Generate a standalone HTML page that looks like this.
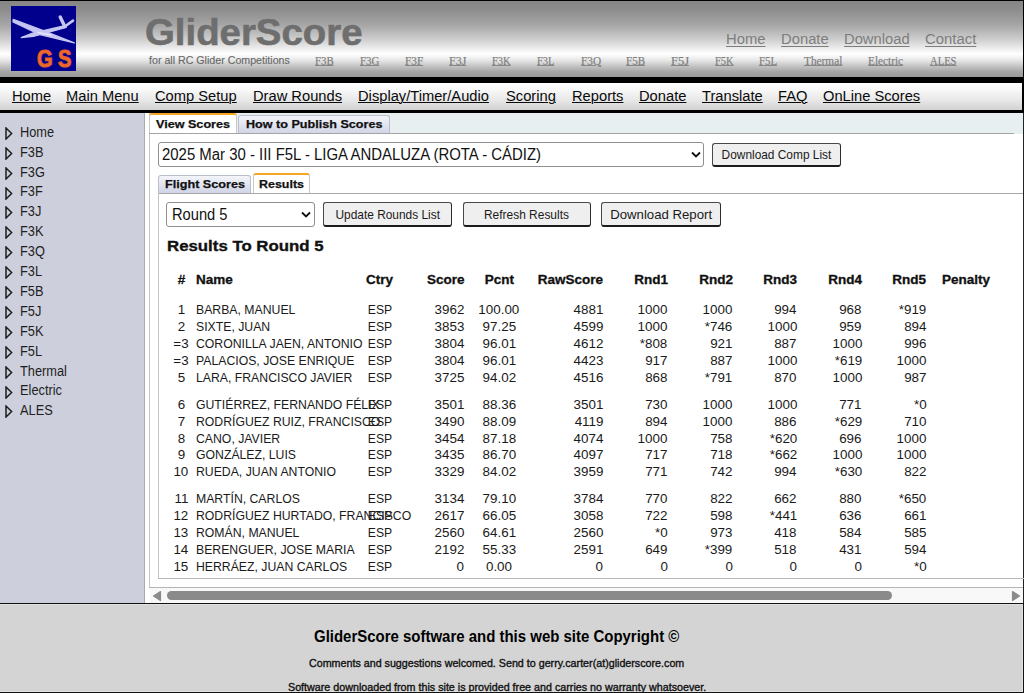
<!DOCTYPE html>
<html><head><meta charset="utf-8"><style>
*{margin:0;padding:0;box-sizing:border-box}
html,body{width:1024px;height:693px;overflow:hidden;background:#fff;font-family:"Liberation Sans",sans-serif;color:#000}
.a{position:absolute}
.c{position:absolute;white-space:nowrap;line-height:normal}
.u{text-decoration:underline}
</style></head><body>
<div class="a" style="left:0;top:0;width:1024px;height:77px;background:linear-gradient(#000 0px,#000 1px,#858585 1px,#8d8d8d 10px,#a6a6a6 25px,#d0d0d0 40px,#f2f2f2 50px,#ffffff 54px,#e8e8e8 60px,#bfbfbf 67px,#a4a4a4 72px,#9a9a9a 77px)"></div>
<div class="a" style="left:1023px;top:0;width:1px;height:113px;background:#000"></div>
<svg class="a" style="left:11px;top:6px" width="65" height="65" viewBox="0 0 65 65">
<rect x="0" y="0" width="65" height="65" fill="#00008c"/>
<g fill="#c6c6f4" stroke="#c6c6f4" stroke-linejoin="round" stroke-linecap="round">
<path d="M2.2 13.4 L31 24.0 L63.3 36.9 L29.0 28.6 L2.0 15.8 Z" stroke-width="1.3"/>
<path d="M10.2 31.6 L21.6 27.0 L54.8 19.4 L55.3 21.5 L22.4 30.4 Z" stroke-width="1.1"/>
<path d="M49.2 11 L53.3 19.5" stroke-width="3.4" fill="none"/>
<path d="M53.5 20.8 L62 14.6" stroke-width="2.6" fill="none"/>
<path d="M27 26.5 L40 29" stroke="#e4e4fa" stroke-width="1.6" fill="none"/>
</g>
<g font-family="Liberation Sans" font-weight="bold" font-size="24" fill="#ee6a2c" stroke="#e8602a" stroke-width="1.1"><text transform="translate(26,61) scale(0.84,1)">G</text><text transform="translate(47,61) scale(0.84,1)">S</text></g>
</svg>
<div class="c" style="top:11.00px;font-size:37.3px;color:#6e6e6e;font-weight:bold;left:144.70px;transform:scaleX(1.0286);transform-origin:left 0;-webkit-text-stroke:0.6px #6e6e6e;">GliderScore</div>
<div class="c" style="top:53.63px;font-size:11.2px;color:#686868;left:148.90px;transform:scaleX(0.9518);transform-origin:left 0;-webkit-text-stroke:0.15px #686868;">for all RC Glider Competitions</div>
<div class="c" style="top:30.20px;font-size:15.3px;color:#7d7d7d;left:726.40px;transform:scaleX(0.9678);transform-origin:left 0;text-decoration:underline;text-underline-offset:1.5px;text-decoration-thickness:1px;">Home</div>
<div class="c" style="top:30.20px;font-size:15.3px;color:#7d7d7d;left:781.20px;transform:scaleX(0.9668);transform-origin:left 0;text-decoration:underline;text-underline-offset:1.5px;text-decoration-thickness:1px;">Donate</div>
<div class="c" style="top:30.20px;font-size:15.3px;color:#7d7d7d;left:844.20px;transform:scaleX(0.9641);transform-origin:left 0;text-decoration:underline;text-underline-offset:1.5px;text-decoration-thickness:1px;">Download</div>
<div class="c" style="top:30.20px;font-size:15.3px;color:#7d7d7d;left:925.00px;transform:scaleX(0.9729);transform-origin:left 0;text-decoration:underline;text-underline-offset:1.5px;text-decoration-thickness:1px;">Contact</div>
<div class="c" style="top:53.77px;font-size:12.5px;color:#7c7c7c;font-family:'Liberation Serif',serif;left:314.80px;transform:scaleX(0.8635);transform-origin:left 0;text-decoration:underline;text-underline-offset:0px;-webkit-text-stroke:0.2px #888;">F3B</div>
<div class="c" style="top:53.77px;font-size:12.5px;color:#7c7c7c;font-family:'Liberation Serif',serif;left:359.80px;transform:scaleX(0.8682);transform-origin:left 0;text-decoration:underline;text-underline-offset:0px;-webkit-text-stroke:0.2px #888;">F3G</div>
<div class="c" style="top:53.77px;font-size:12.5px;color:#7c7c7c;font-family:'Liberation Serif',serif;left:404.80px;transform:scaleX(0.9030);transform-origin:left 0;text-decoration:underline;text-underline-offset:0px;-webkit-text-stroke:0.2px #888;">F3F</div>
<div class="c" style="top:53.77px;font-size:12.5px;color:#7c7c7c;font-family:'Liberation Serif',serif;left:448.70px;transform:scaleX(0.9576);transform-origin:left 0;text-decoration:underline;text-underline-offset:0px;-webkit-text-stroke:0.2px #888;">F3J</div>
<div class="c" style="top:53.77px;font-size:12.5px;color:#7c7c7c;font-family:'Liberation Serif',serif;left:492.30px;transform:scaleX(0.8412);transform-origin:left 0;text-decoration:underline;text-underline-offset:0px;-webkit-text-stroke:0.2px #888;">F3K</div>
<div class="c" style="top:53.77px;font-size:12.5px;color:#7c7c7c;font-family:'Liberation Serif',serif;left:536.60px;transform:scaleX(0.8302);transform-origin:left 0;text-decoration:underline;text-underline-offset:0px;-webkit-text-stroke:0.2px #888;">F3L</div>
<div class="c" style="top:53.77px;font-size:12.5px;color:#7c7c7c;font-family:'Liberation Serif',serif;left:580.60px;transform:scaleX(0.8997);transform-origin:left 0;text-decoration:underline;text-underline-offset:0px;-webkit-text-stroke:0.2px #888;">F3Q</div>
<div class="c" style="top:53.77px;font-size:12.5px;color:#7c7c7c;font-family:'Liberation Serif',serif;left:626.30px;transform:scaleX(0.8821);transform-origin:left 0;text-decoration:underline;text-underline-offset:0px;-webkit-text-stroke:0.2px #888;">F5B</div>
<div class="c" style="top:53.77px;font-size:12.5px;color:#7c7c7c;font-family:'Liberation Serif',serif;left:670.50px;transform:scaleX(0.9963);transform-origin:left 0;text-decoration:underline;text-underline-offset:0px;-webkit-text-stroke:0.2px #888;">F5J</div>
<div class="c" style="top:53.77px;font-size:12.5px;color:#7c7c7c;font-family:'Liberation Serif',serif;left:714.60px;transform:scaleX(0.8367);transform-origin:left 0;text-decoration:underline;text-underline-offset:0px;-webkit-text-stroke:0.2px #888;">F5K</div>
<div class="c" style="top:53.77px;font-size:12.5px;color:#7c7c7c;font-family:'Liberation Serif',serif;left:758.90px;transform:scaleX(0.8686);transform-origin:left 0;text-decoration:underline;text-underline-offset:0px;-webkit-text-stroke:0.2px #888;">F5L</div>
<div class="c" style="top:53.77px;font-size:12.5px;color:#7c7c7c;font-family:'Liberation Serif',serif;left:803.50px;transform:scaleX(0.9046);transform-origin:left 0;text-decoration:underline;text-underline-offset:0px;-webkit-text-stroke:0.2px #888;">Thermal</div>
<div class="c" style="top:53.77px;font-size:12.5px;color:#7c7c7c;font-family:'Liberation Serif',serif;left:868.30px;transform:scaleX(0.9007);transform-origin:left 0;text-decoration:underline;text-underline-offset:0px;-webkit-text-stroke:0.2px #888;">Electric</div>
<div class="c" style="top:53.77px;font-size:12.5px;color:#7c7c7c;font-family:'Liberation Serif',serif;left:930.10px;transform:scaleX(0.8480);transform-origin:left 0;text-decoration:underline;text-underline-offset:0px;-webkit-text-stroke:0.2px #888;">ALES</div>
<div class="a" style="left:0;top:77px;width:1024px;height:6px;background:#000"></div>
<div class="a" style="left:0;top:83px;width:1022px;height:27px;background:linear-gradient(#ffffff 0px,#f8f8f8 7px,#e8e8e8 17px,#d2d2d2 27px)"></div>
<div class="a" style="left:1022px;top:82px;width:2px;height:28px;background:#000"></div>
<div class="a" style="left:0;top:110px;width:1024px;height:3px;background:#000"></div>
<div class="c" style="top:87.18px;font-size:15.1px;color:#0a0a0a;left:11.60px;transform:scaleX(0.9735);transform-origin:left 0;text-decoration:underline;text-underline-offset:1.2px;text-decoration-thickness:1px;">Home</div>
<div class="c" style="top:87.18px;font-size:15.1px;color:#0a0a0a;left:66.40px;transform:scaleX(0.9735);transform-origin:left 0;text-decoration:underline;text-underline-offset:1.2px;text-decoration-thickness:1px;">Main Menu</div>
<div class="c" style="top:87.18px;font-size:15.1px;color:#0a0a0a;left:154.80px;transform:scaleX(0.9735);transform-origin:left 0;text-decoration:underline;text-underline-offset:1.2px;text-decoration-thickness:1px;">Comp Setup</div>
<div class="c" style="top:87.18px;font-size:15.1px;color:#0a0a0a;left:253.00px;transform:scaleX(0.9735);transform-origin:left 0;text-decoration:underline;text-underline-offset:1.2px;text-decoration-thickness:1px;">Draw Rounds</div>
<div class="c" style="top:87.18px;font-size:15.1px;color:#0a0a0a;left:358.40px;transform:scaleX(0.9735);transform-origin:left 0;text-decoration:underline;text-underline-offset:1.2px;text-decoration-thickness:1px;">Display/Timer/Audio</div>
<div class="c" style="top:87.18px;font-size:15.1px;color:#0a0a0a;left:506.00px;transform:scaleX(0.9735);transform-origin:left 0;text-decoration:underline;text-underline-offset:1.2px;text-decoration-thickness:1px;">Scoring</div>
<div class="c" style="top:87.18px;font-size:15.1px;color:#0a0a0a;left:571.60px;transform:scaleX(0.9735);transform-origin:left 0;text-decoration:underline;text-underline-offset:1.2px;text-decoration-thickness:1px;">Reports</div>
<div class="c" style="top:87.18px;font-size:15.1px;color:#0a0a0a;left:638.60px;transform:scaleX(0.9735);transform-origin:left 0;text-decoration:underline;text-underline-offset:1.2px;text-decoration-thickness:1px;">Donate</div>
<div class="c" style="top:87.18px;font-size:15.1px;color:#0a0a0a;left:702.40px;transform:scaleX(0.9735);transform-origin:left 0;text-decoration:underline;text-underline-offset:1.2px;text-decoration-thickness:1px;">Translate</div>
<div class="c" style="top:87.18px;font-size:15.1px;color:#0a0a0a;left:778.20px;transform:scaleX(0.9735);transform-origin:left 0;text-decoration:underline;text-underline-offset:1.2px;text-decoration-thickness:1px;">FAQ</div>
<div class="c" style="top:87.18px;font-size:15.1px;color:#0a0a0a;left:823.40px;transform:scaleX(0.9735);transform-origin:left 0;text-decoration:underline;text-underline-offset:1.2px;text-decoration-thickness:1px;">OnLine Scores</div>
<div class="a" style="left:0;top:113px;width:144px;height:490px;background:#cdd0dc"></div>
<div class="a" style="left:144px;top:113px;width:1px;height:490px;background:#a9abb0"></div>
<svg class="a" style="left:5px;top:126.80px" width="8" height="13" viewBox="0 0 8 13"><path d="M1 1 L6.6 6.5 L1 12Z" fill="none" stroke="#1e1e1e" stroke-width="1.5"/></svg>
<div class="c" style="top:123.72px;font-size:14px;color:#1e1e1e;left:19.50px;transform:scaleX(0.9143);transform-origin:left 0;">Home</div>
<svg class="a" style="left:5px;top:146.70px" width="8" height="13" viewBox="0 0 8 13"><path d="M1 1 L6.6 6.5 L1 12Z" fill="none" stroke="#1e1e1e" stroke-width="1.5"/></svg>
<div class="c" style="top:143.62px;font-size:14px;color:#1e1e1e;left:19.50px;transform:scaleX(0.9143);transform-origin:left 0;">F3B</div>
<svg class="a" style="left:5px;top:166.60px" width="8" height="13" viewBox="0 0 8 13"><path d="M1 1 L6.6 6.5 L1 12Z" fill="none" stroke="#1e1e1e" stroke-width="1.5"/></svg>
<div class="c" style="top:163.52px;font-size:14px;color:#1e1e1e;left:19.50px;transform:scaleX(0.9143);transform-origin:left 0;">F3G</div>
<svg class="a" style="left:5px;top:186.50px" width="8" height="13" viewBox="0 0 8 13"><path d="M1 1 L6.6 6.5 L1 12Z" fill="none" stroke="#1e1e1e" stroke-width="1.5"/></svg>
<div class="c" style="top:183.42px;font-size:14px;color:#1e1e1e;left:19.50px;transform:scaleX(0.9143);transform-origin:left 0;">F3F</div>
<svg class="a" style="left:5px;top:206.40px" width="8" height="13" viewBox="0 0 8 13"><path d="M1 1 L6.6 6.5 L1 12Z" fill="none" stroke="#1e1e1e" stroke-width="1.5"/></svg>
<div class="c" style="top:203.32px;font-size:14px;color:#1e1e1e;left:19.50px;transform:scaleX(0.9143);transform-origin:left 0;">F3J</div>
<svg class="a" style="left:5px;top:226.30px" width="8" height="13" viewBox="0 0 8 13"><path d="M1 1 L6.6 6.5 L1 12Z" fill="none" stroke="#1e1e1e" stroke-width="1.5"/></svg>
<div class="c" style="top:223.22px;font-size:14px;color:#1e1e1e;left:19.50px;transform:scaleX(0.9143);transform-origin:left 0;">F3K</div>
<svg class="a" style="left:5px;top:246.20px" width="8" height="13" viewBox="0 0 8 13"><path d="M1 1 L6.6 6.5 L1 12Z" fill="none" stroke="#1e1e1e" stroke-width="1.5"/></svg>
<div class="c" style="top:243.12px;font-size:14px;color:#1e1e1e;left:19.50px;transform:scaleX(0.9143);transform-origin:left 0;">F3Q</div>
<svg class="a" style="left:5px;top:266.10px" width="8" height="13" viewBox="0 0 8 13"><path d="M1 1 L6.6 6.5 L1 12Z" fill="none" stroke="#1e1e1e" stroke-width="1.5"/></svg>
<div class="c" style="top:263.02px;font-size:14px;color:#1e1e1e;left:19.50px;transform:scaleX(0.9143);transform-origin:left 0;">F3L</div>
<svg class="a" style="left:5px;top:286.00px" width="8" height="13" viewBox="0 0 8 13"><path d="M1 1 L6.6 6.5 L1 12Z" fill="none" stroke="#1e1e1e" stroke-width="1.5"/></svg>
<div class="c" style="top:282.92px;font-size:14px;color:#1e1e1e;left:19.50px;transform:scaleX(0.9143);transform-origin:left 0;">F5B</div>
<svg class="a" style="left:5px;top:305.90px" width="8" height="13" viewBox="0 0 8 13"><path d="M1 1 L6.6 6.5 L1 12Z" fill="none" stroke="#1e1e1e" stroke-width="1.5"/></svg>
<div class="c" style="top:302.82px;font-size:14px;color:#1e1e1e;left:19.50px;transform:scaleX(0.9143);transform-origin:left 0;">F5J</div>
<svg class="a" style="left:5px;top:325.80px" width="8" height="13" viewBox="0 0 8 13"><path d="M1 1 L6.6 6.5 L1 12Z" fill="none" stroke="#1e1e1e" stroke-width="1.5"/></svg>
<div class="c" style="top:322.72px;font-size:14px;color:#1e1e1e;left:19.50px;transform:scaleX(0.9143);transform-origin:left 0;">F5K</div>
<svg class="a" style="left:5px;top:345.70px" width="8" height="13" viewBox="0 0 8 13"><path d="M1 1 L6.6 6.5 L1 12Z" fill="none" stroke="#1e1e1e" stroke-width="1.5"/></svg>
<div class="c" style="top:342.62px;font-size:14px;color:#1e1e1e;left:19.50px;transform:scaleX(0.9143);transform-origin:left 0;">F5L</div>
<svg class="a" style="left:5px;top:365.60px" width="8" height="13" viewBox="0 0 8 13"><path d="M1 1 L6.6 6.5 L1 12Z" fill="none" stroke="#1e1e1e" stroke-width="1.5"/></svg>
<div class="c" style="top:362.52px;font-size:14px;color:#1e1e1e;left:19.50px;transform:scaleX(0.9143);transform-origin:left 0;">Thermal</div>
<svg class="a" style="left:5px;top:385.50px" width="8" height="13" viewBox="0 0 8 13"><path d="M1 1 L6.6 6.5 L1 12Z" fill="none" stroke="#1e1e1e" stroke-width="1.5"/></svg>
<div class="c" style="top:382.42px;font-size:14px;color:#1e1e1e;left:19.50px;transform:scaleX(0.9143);transform-origin:left 0;">Electric</div>
<svg class="a" style="left:5px;top:405.40px" width="8" height="13" viewBox="0 0 8 13"><path d="M1 1 L6.6 6.5 L1 12Z" fill="none" stroke="#1e1e1e" stroke-width="1.5"/></svg>
<div class="c" style="top:402.32px;font-size:14px;color:#1e1e1e;left:19.50px;transform:scaleX(0.9143);transform-origin:left 0;">ALES</div>
<div class="a" style="left:145px;top:113px;width:878px;height:490px;background:#fff"></div>
<div class="a" style="left:1023px;top:113px;width:1px;height:490px;background:#222"></div>
<div class="a" style="left:149px;top:113px;width:874px;height:21px;background:#e8eff1"></div>
<div class="a" style="left:149px;top:113px;width:1px;height:475px;background:#c4c4c4"></div>
<div class="a" style="left:149px;top:587px;width:874px;height:1px;background:#b4b4b4"></div>
<div class="a" style="left:149px;top:113px;width:88px;height:21px;background:#fff;border-top:2.5px solid #f5a623;border-left:1px solid #c8c8c8;border-right:1px solid #c8c8c8;border-radius:3px 3px 0 0"></div>
<div class="c" style="top:117.35px;font-size:11.8px;color:#111;font-weight:bold;left:156.00px;transform:scaleX(1.0676);transform-origin:left 0;-webkit-text-stroke:0.25px #111;">View Scores</div>
<div class="a" style="left:237.5px;top:115px;width:152px;height:18px;background:linear-gradient(#f4f5fa,#d2d5e6);border:1px solid #b9c0cc;border-bottom:none;border-radius:3px 3px 0 0"></div>
<div class="a" style="left:149px;top:133px;width:865px;height:1px;background:#a4a4a4"></div>
<div class="c" style="top:117.35px;font-size:11.8px;color:#111;font-weight:bold;left:245.80px;transform:scaleX(1.0676);transform-origin:left 0;-webkit-text-stroke:0.25px #111;">How to Publish Scores</div>
<div class="a" style="left:157.5px;top:142px;width:546.5px;height:24.8px;border:1px solid #8f8f8f;border-radius:3px;background:#fff"></div>
<div class="c" style="top:146.28px;font-size:16px;color:#111;left:162.20px;transform:scaleX(0.9327);transform-origin:left 0;">2025 Mar 30 - III F5L - LIGA ANDALUZA (ROTA - CÁDIZ)</div>
<svg class="a" style="left:691px;top:151px" width="10" height="8" viewBox="0 0 10 8"><path d="M1 1.5 L5 5.5 L9 1.5" fill="none" stroke="#111" stroke-width="1.8"/></svg>
<div class="a" style="left:712.4px;top:142.9px;width:128.5px;height:24.4px;border:1.5px solid #484848;border-bottom:2.3px solid #1c1c1c;border-right:1.9px solid #2c2c2c;border-radius:3px;background:#efefef"></div>
<div class="c" style="top:148.22px;font-size:11.9px;color:#1a1a1a;left:721.60px;">Download Comp List</div>
<div class="a" style="left:158px;top:192.5px;width:865px;height:1px;background:#a8a8a8"></div>
<div class="a" style="left:158px;top:174.8px;width:93px;height:18px;background:linear-gradient(#f4f5fa,#d0d4e6);border:1px solid #b9c0cc;border-bottom:none;border-radius:3px 3px 0 0"></div>
<div class="c" style="top:176.65px;font-size:11.8px;color:#111;font-weight:bold;left:164.50px;transform:scaleX(1.0703);transform-origin:left 0;-webkit-text-stroke:0.25px #111;">Flight Scores</div>
<div class="a" style="left:252.9px;top:172.8px;width:57.5px;height:20.5px;background:#fff;border-top:2.5px solid #f5a623;border-left:1px solid #c8c8c8;border-right:1px solid #c8c8c8;border-radius:3px 3px 0 0"></div>
<div class="c" style="top:176.65px;font-size:11.8px;color:#111;font-weight:bold;left:259.00px;transform:scaleX(1.0557);transform-origin:left 0;-webkit-text-stroke:0.25px #111;">Results</div>
<div class="a" style="left:157.5px;top:193px;width:1px;height:386px;background:#c4c4c4"></div>
<div class="a" style="left:157.5px;top:578px;width:866px;height:1px;background:#b8b8b8"></div>
<div class="a" style="left:166.3px;top:202.4px;width:148.4px;height:24.5px;border:1px solid #8f8f8f;border-radius:3px;background:#fff"></div>
<div class="c" style="top:204.71px;font-size:16.3px;color:#111;left:171.70px;transform:scaleX(0.9006);transform-origin:left 0;">Round 5</div>
<svg class="a" style="left:301px;top:211px" width="10" height="8" viewBox="0 0 10 8"><path d="M1 1.5 L5 5.5 L9 1.5" fill="none" stroke="#111" stroke-width="1.8"/></svg>
<div class="a" style="left:323px;top:202px;width:129.0px;height:25.3px;border:1.5px solid #484848;border-bottom:2.3px solid #1c1c1c;border-right:1.9px solid #2c2c2c;border-radius:3px;background:#efefef"></div>
<div class="c" style="top:207.92px;font-size:11.9px;color:#1a1a1a;left:335.50px;">Update Rounds List</div>
<div class="a" style="left:462.5px;top:202px;width:128.1px;height:25.3px;border:1.5px solid #484848;border-bottom:2.3px solid #1c1c1c;border-right:1.9px solid #2c2c2c;border-radius:3px;background:#efefef"></div>
<div class="c" style="top:207.92px;font-size:11.9px;color:#1a1a1a;left:484.00px;transform:scaleX(1.0041);transform-origin:left 0;">Refresh Results</div>
<div class="a" style="left:601.3px;top:202px;width:119.5px;height:25.3px;border:1.5px solid #484848;border-bottom:2.3px solid #1c1c1c;border-right:1.9px solid #2c2c2c;border-radius:3px;background:#efefef"></div>
<div class="c" style="top:206.72px;font-size:13.2px;color:#1a1a1a;left:610.20px;">Download Report</div>
<div class="c" style="top:237.30px;font-size:15px;color:#111;font-weight:bold;left:167.00px;transform:scaleX(1.1208);transform-origin:left 0;-webkit-text-stroke:0.35px #111;">Results To Round 5</div>
<div class="c" style="top:272.94px;font-size:12.4px;color:#111;font-weight:bold;left:177.55px;transform:scaleX(1.0887);transform-origin:center 0;-webkit-text-stroke:0.3px #111;">#</div>
<div class="c" style="top:272.94px;font-size:12.4px;color:#111;font-weight:bold;left:195.90px;transform:scaleX(1.0887);transform-origin:left 0;-webkit-text-stroke:0.3px #111;">Name</div>
<div class="c" style="top:272.94px;font-size:12.4px;color:#111;font-weight:bold;left:367.20px;transform:scaleX(1.0887);transform-origin:center 0;-webkit-text-stroke:0.3px #111;">Ctry</div>
<div class="c" style="top:272.94px;font-size:12.4px;color:#111;font-weight:bold;left:429.74px;transform:scaleX(1.0887);transform-origin:right 0;-webkit-text-stroke:0.3px #111;">Score</div>
<div class="c" style="top:272.94px;font-size:12.4px;color:#111;font-weight:bold;left:485.86px;transform:scaleX(1.0887);transform-origin:center 0;-webkit-text-stroke:0.3px #111;">Pcnt</div>
<div class="c" style="top:272.94px;font-size:12.4px;color:#111;font-weight:bold;left:543.14px;transform:scaleX(1.0887);transform-origin:right 0;-webkit-text-stroke:0.3px #111;">RawScore</div>
<div class="c" style="top:272.94px;font-size:12.4px;color:#111;font-weight:bold;left:636.70px;transform:scaleX(1.0887);transform-origin:right 0;-webkit-text-stroke:0.3px #111;">Rnd1</div>
<div class="c" style="top:272.94px;font-size:12.4px;color:#111;font-weight:bold;left:701.50px;transform:scaleX(1.0887);transform-origin:right 0;-webkit-text-stroke:0.3px #111;">Rnd2</div>
<div class="c" style="top:272.94px;font-size:12.4px;color:#111;font-weight:bold;left:766.00px;transform:scaleX(1.0887);transform-origin:right 0;-webkit-text-stroke:0.3px #111;">Rnd3</div>
<div class="c" style="top:272.94px;font-size:12.4px;color:#111;font-weight:bold;left:831.00px;transform:scaleX(1.0887);transform-origin:right 0;-webkit-text-stroke:0.3px #111;">Rnd4</div>
<div class="c" style="top:272.94px;font-size:12.4px;color:#111;font-weight:bold;left:895.40px;transform:scaleX(1.0887);transform-origin:right 0;-webkit-text-stroke:0.3px #111;">Rnd5</div>
<div class="c" style="top:272.94px;font-size:12.4px;color:#111;font-weight:bold;left:941.90px;transform:scaleX(1.0887);transform-origin:left 0;-webkit-text-stroke:0.3px #111;">Penalty</div>
<div class="c" style="top:303.40px;font-size:12.3px;color:#1a1a1a;left:177.58px;transform:scaleX(1.0894);transform-origin:center 0;">1</div>
<div class="c" style="top:303.41px;font-size:12.2px;color:#1a1a1a;left:195.90px;transform:scaleX(1.0049);transform-origin:left 0;">BARBA, MANUEL</div>
<div class="c" style="top:303.41px;font-size:12.2px;color:#1a1a1a;left:367.79px;">ESP</div>
<div class="c" style="top:303.40px;font-size:12.3px;color:#1a1a1a;left:436.84px;transform:scaleX(1.0894);transform-origin:right 0;">3962</div>
<div class="c" style="top:303.40px;font-size:12.3px;color:#1a1a1a;left:480.49px;transform:scaleX(1.0894);transform-origin:center 0;">100.00</div>
<div class="c" style="top:303.40px;font-size:12.3px;color:#1a1a1a;left:575.74px;transform:scaleX(1.0894);transform-origin:right 0;">4881</div>
<div class="c" style="top:303.40px;font-size:12.3px;color:#1a1a1a;left:640.34px;transform:scaleX(1.0894);transform-origin:right 0;">1000</div>
<div class="c" style="top:303.40px;font-size:12.3px;color:#1a1a1a;left:705.14px;transform:scaleX(1.0894);transform-origin:right 0;">1000</div>
<div class="c" style="top:303.40px;font-size:12.3px;color:#1a1a1a;left:776.48px;transform:scaleX(1.0894);transform-origin:right 0;">994</div>
<div class="c" style="top:303.40px;font-size:12.3px;color:#1a1a1a;left:841.48px;transform:scaleX(1.0894);transform-origin:right 0;">968</div>
<div class="c" style="top:303.40px;font-size:12.3px;color:#1a1a1a;left:901.09px;transform:scaleX(1.0894);transform-origin:right 0;">*919</div>
<div class="c" style="top:320.30px;font-size:12.3px;color:#1a1a1a;left:177.58px;transform:scaleX(1.0894);transform-origin:center 0;">2</div>
<div class="c" style="top:320.31px;font-size:12.2px;color:#1a1a1a;left:195.90px;transform:scaleX(1.0049);transform-origin:left 0;">SIXTE, JUAN</div>
<div class="c" style="top:320.31px;font-size:12.2px;color:#1a1a1a;left:367.79px;">ESP</div>
<div class="c" style="top:320.30px;font-size:12.3px;color:#1a1a1a;left:436.84px;transform:scaleX(1.0894);transform-origin:right 0;">3853</div>
<div class="c" style="top:320.30px;font-size:12.3px;color:#1a1a1a;left:483.91px;transform:scaleX(1.0894);transform-origin:center 0;">97.25</div>
<div class="c" style="top:320.30px;font-size:12.3px;color:#1a1a1a;left:575.74px;transform:scaleX(1.0894);transform-origin:right 0;">4599</div>
<div class="c" style="top:320.30px;font-size:12.3px;color:#1a1a1a;left:640.34px;transform:scaleX(1.0894);transform-origin:right 0;">1000</div>
<div class="c" style="top:320.30px;font-size:12.3px;color:#1a1a1a;left:707.19px;transform:scaleX(1.0894);transform-origin:right 0;">*746</div>
<div class="c" style="top:320.30px;font-size:12.3px;color:#1a1a1a;left:769.64px;transform:scaleX(1.0894);transform-origin:right 0;">1000</div>
<div class="c" style="top:320.30px;font-size:12.3px;color:#1a1a1a;left:841.48px;transform:scaleX(1.0894);transform-origin:right 0;">959</div>
<div class="c" style="top:320.30px;font-size:12.3px;color:#1a1a1a;left:905.88px;transform:scaleX(1.0894);transform-origin:right 0;">894</div>
<div class="c" style="top:337.20px;font-size:12.3px;color:#1a1a1a;left:173.99px;transform:scaleX(1.0894);transform-origin:center 0;">=3</div>
<div class="c" style="top:337.21px;font-size:12.2px;color:#1a1a1a;left:195.90px;transform:scaleX(1.0049);transform-origin:left 0;">CORONILLA JAEN, ANTONIO</div>
<div class="c" style="top:337.21px;font-size:12.2px;color:#1a1a1a;left:367.79px;">ESP</div>
<div class="c" style="top:337.20px;font-size:12.3px;color:#1a1a1a;left:436.84px;transform:scaleX(1.0894);transform-origin:right 0;">3804</div>
<div class="c" style="top:337.20px;font-size:12.3px;color:#1a1a1a;left:483.91px;transform:scaleX(1.0894);transform-origin:center 0;">96.01</div>
<div class="c" style="top:337.20px;font-size:12.3px;color:#1a1a1a;left:575.74px;transform:scaleX(1.0894);transform-origin:right 0;">4612</div>
<div class="c" style="top:337.20px;font-size:12.3px;color:#1a1a1a;left:642.39px;transform:scaleX(1.0894);transform-origin:right 0;">*808</div>
<div class="c" style="top:337.20px;font-size:12.3px;color:#1a1a1a;left:711.98px;transform:scaleX(1.0894);transform-origin:right 0;">921</div>
<div class="c" style="top:337.20px;font-size:12.3px;color:#1a1a1a;left:776.48px;transform:scaleX(1.0894);transform-origin:right 0;">887</div>
<div class="c" style="top:337.20px;font-size:12.3px;color:#1a1a1a;left:834.64px;transform:scaleX(1.0894);transform-origin:right 0;">1000</div>
<div class="c" style="top:337.20px;font-size:12.3px;color:#1a1a1a;left:905.88px;transform:scaleX(1.0894);transform-origin:right 0;">996</div>
<div class="c" style="top:354.10px;font-size:12.3px;color:#1a1a1a;left:173.99px;transform:scaleX(1.0894);transform-origin:center 0;">=3</div>
<div class="c" style="top:354.11px;font-size:12.2px;color:#1a1a1a;left:195.90px;transform:scaleX(1.0049);transform-origin:left 0;">PALACIOS, JOSE ENRIQUE</div>
<div class="c" style="top:354.11px;font-size:12.2px;color:#1a1a1a;left:367.79px;">ESP</div>
<div class="c" style="top:354.10px;font-size:12.3px;color:#1a1a1a;left:436.84px;transform:scaleX(1.0894);transform-origin:right 0;">3804</div>
<div class="c" style="top:354.10px;font-size:12.3px;color:#1a1a1a;left:483.91px;transform:scaleX(1.0894);transform-origin:center 0;">96.01</div>
<div class="c" style="top:354.10px;font-size:12.3px;color:#1a1a1a;left:575.74px;transform:scaleX(1.0894);transform-origin:right 0;">4423</div>
<div class="c" style="top:354.10px;font-size:12.3px;color:#1a1a1a;left:647.18px;transform:scaleX(1.0894);transform-origin:right 0;">917</div>
<div class="c" style="top:354.10px;font-size:12.3px;color:#1a1a1a;left:711.98px;transform:scaleX(1.0894);transform-origin:right 0;">887</div>
<div class="c" style="top:354.10px;font-size:12.3px;color:#1a1a1a;left:769.64px;transform:scaleX(1.0894);transform-origin:right 0;">1000</div>
<div class="c" style="top:354.10px;font-size:12.3px;color:#1a1a1a;left:836.69px;transform:scaleX(1.0894);transform-origin:right 0;">*619</div>
<div class="c" style="top:354.10px;font-size:12.3px;color:#1a1a1a;left:899.04px;transform:scaleX(1.0894);transform-origin:right 0;">1000</div>
<div class="c" style="top:371.00px;font-size:12.3px;color:#1a1a1a;left:177.58px;transform:scaleX(1.0894);transform-origin:center 0;">5</div>
<div class="c" style="top:371.01px;font-size:12.2px;color:#1a1a1a;left:195.90px;transform:scaleX(1.0049);transform-origin:left 0;">LARA, FRANCISCO JAVIER</div>
<div class="c" style="top:371.01px;font-size:12.2px;color:#1a1a1a;left:367.79px;">ESP</div>
<div class="c" style="top:371.00px;font-size:12.3px;color:#1a1a1a;left:436.84px;transform:scaleX(1.0894);transform-origin:right 0;">3725</div>
<div class="c" style="top:371.00px;font-size:12.3px;color:#1a1a1a;left:483.91px;transform:scaleX(1.0894);transform-origin:center 0;">94.02</div>
<div class="c" style="top:371.00px;font-size:12.3px;color:#1a1a1a;left:575.74px;transform:scaleX(1.0894);transform-origin:right 0;">4516</div>
<div class="c" style="top:371.00px;font-size:12.3px;color:#1a1a1a;left:647.18px;transform:scaleX(1.0894);transform-origin:right 0;">868</div>
<div class="c" style="top:371.00px;font-size:12.3px;color:#1a1a1a;left:707.19px;transform:scaleX(1.0894);transform-origin:right 0;">*791</div>
<div class="c" style="top:371.00px;font-size:12.3px;color:#1a1a1a;left:776.48px;transform:scaleX(1.0894);transform-origin:right 0;">870</div>
<div class="c" style="top:371.00px;font-size:12.3px;color:#1a1a1a;left:834.64px;transform:scaleX(1.0894);transform-origin:right 0;">1000</div>
<div class="c" style="top:371.00px;font-size:12.3px;color:#1a1a1a;left:905.88px;transform:scaleX(1.0894);transform-origin:right 0;">987</div>
<div class="c" style="top:397.70px;font-size:12.3px;color:#1a1a1a;left:177.58px;transform:scaleX(1.0894);transform-origin:center 0;">6</div>
<div class="c" style="top:397.71px;font-size:12.2px;color:#1a1a1a;left:195.90px;transform:scaleX(1.0049);transform-origin:left 0;">GUTIÉRREZ, FERNANDO FÉLIX</div>
<div class="c" style="top:397.71px;font-size:12.2px;color:#1a1a1a;left:367.79px;">ESP</div>
<div class="c" style="top:397.70px;font-size:12.3px;color:#1a1a1a;left:436.84px;transform:scaleX(1.0894);transform-origin:right 0;">3501</div>
<div class="c" style="top:397.70px;font-size:12.3px;color:#1a1a1a;left:483.91px;transform:scaleX(1.0894);transform-origin:center 0;">88.36</div>
<div class="c" style="top:397.70px;font-size:12.3px;color:#1a1a1a;left:575.74px;transform:scaleX(1.0894);transform-origin:right 0;">3501</div>
<div class="c" style="top:397.70px;font-size:12.3px;color:#1a1a1a;left:647.18px;transform:scaleX(1.0894);transform-origin:right 0;">730</div>
<div class="c" style="top:397.70px;font-size:12.3px;color:#1a1a1a;left:705.14px;transform:scaleX(1.0894);transform-origin:right 0;">1000</div>
<div class="c" style="top:397.70px;font-size:12.3px;color:#1a1a1a;left:769.64px;transform:scaleX(1.0894);transform-origin:right 0;">1000</div>
<div class="c" style="top:397.70px;font-size:12.3px;color:#1a1a1a;left:841.48px;transform:scaleX(1.0894);transform-origin:right 0;">771</div>
<div class="c" style="top:397.70px;font-size:12.3px;color:#1a1a1a;left:914.77px;transform:scaleX(1.0894);transform-origin:right 0;">*0</div>
<div class="c" style="top:414.60px;font-size:12.3px;color:#1a1a1a;left:177.58px;transform:scaleX(1.0894);transform-origin:center 0;">7</div>
<div class="c" style="top:414.61px;font-size:12.2px;color:#1a1a1a;left:195.90px;transform:scaleX(1.0049);transform-origin:left 0;">RODRÍGUEZ RUIZ, FRANCISCO</div>
<div class="c" style="top:414.61px;font-size:12.2px;color:#1a1a1a;left:367.79px;">ESP</div>
<div class="c" style="top:414.60px;font-size:12.3px;color:#1a1a1a;left:436.84px;transform:scaleX(1.0894);transform-origin:right 0;">3490</div>
<div class="c" style="top:414.60px;font-size:12.3px;color:#1a1a1a;left:483.91px;transform:scaleX(1.0894);transform-origin:center 0;">88.09</div>
<div class="c" style="top:414.60px;font-size:12.3px;color:#1a1a1a;left:576.65px;transform:scaleX(1.0894);transform-origin:right 0;">4119</div>
<div class="c" style="top:414.60px;font-size:12.3px;color:#1a1a1a;left:647.18px;transform:scaleX(1.0894);transform-origin:right 0;">894</div>
<div class="c" style="top:414.60px;font-size:12.3px;color:#1a1a1a;left:705.14px;transform:scaleX(1.0894);transform-origin:right 0;">1000</div>
<div class="c" style="top:414.60px;font-size:12.3px;color:#1a1a1a;left:776.48px;transform:scaleX(1.0894);transform-origin:right 0;">886</div>
<div class="c" style="top:414.60px;font-size:12.3px;color:#1a1a1a;left:836.69px;transform:scaleX(1.0894);transform-origin:right 0;">*629</div>
<div class="c" style="top:414.60px;font-size:12.3px;color:#1a1a1a;left:905.88px;transform:scaleX(1.0894);transform-origin:right 0;">710</div>
<div class="c" style="top:431.50px;font-size:12.3px;color:#1a1a1a;left:177.58px;transform:scaleX(1.0894);transform-origin:center 0;">8</div>
<div class="c" style="top:431.51px;font-size:12.2px;color:#1a1a1a;left:195.90px;transform:scaleX(1.0049);transform-origin:left 0;">CANO, JAVIER</div>
<div class="c" style="top:431.51px;font-size:12.2px;color:#1a1a1a;left:367.79px;">ESP</div>
<div class="c" style="top:431.50px;font-size:12.3px;color:#1a1a1a;left:436.84px;transform:scaleX(1.0894);transform-origin:right 0;">3454</div>
<div class="c" style="top:431.50px;font-size:12.3px;color:#1a1a1a;left:483.91px;transform:scaleX(1.0894);transform-origin:center 0;">87.18</div>
<div class="c" style="top:431.50px;font-size:12.3px;color:#1a1a1a;left:575.74px;transform:scaleX(1.0894);transform-origin:right 0;">4074</div>
<div class="c" style="top:431.50px;font-size:12.3px;color:#1a1a1a;left:640.34px;transform:scaleX(1.0894);transform-origin:right 0;">1000</div>
<div class="c" style="top:431.50px;font-size:12.3px;color:#1a1a1a;left:711.98px;transform:scaleX(1.0894);transform-origin:right 0;">758</div>
<div class="c" style="top:431.50px;font-size:12.3px;color:#1a1a1a;left:771.69px;transform:scaleX(1.0894);transform-origin:right 0;">*620</div>
<div class="c" style="top:431.50px;font-size:12.3px;color:#1a1a1a;left:841.48px;transform:scaleX(1.0894);transform-origin:right 0;">696</div>
<div class="c" style="top:431.50px;font-size:12.3px;color:#1a1a1a;left:899.04px;transform:scaleX(1.0894);transform-origin:right 0;">1000</div>
<div class="c" style="top:448.40px;font-size:12.3px;color:#1a1a1a;left:177.58px;transform:scaleX(1.0894);transform-origin:center 0;">9</div>
<div class="c" style="top:448.41px;font-size:12.2px;color:#1a1a1a;left:195.90px;transform:scaleX(1.0049);transform-origin:left 0;">GONZÁLEZ, LUIS</div>
<div class="c" style="top:448.41px;font-size:12.2px;color:#1a1a1a;left:367.79px;">ESP</div>
<div class="c" style="top:448.40px;font-size:12.3px;color:#1a1a1a;left:436.84px;transform:scaleX(1.0894);transform-origin:right 0;">3435</div>
<div class="c" style="top:448.40px;font-size:12.3px;color:#1a1a1a;left:483.91px;transform:scaleX(1.0894);transform-origin:center 0;">86.70</div>
<div class="c" style="top:448.40px;font-size:12.3px;color:#1a1a1a;left:575.74px;transform:scaleX(1.0894);transform-origin:right 0;">4097</div>
<div class="c" style="top:448.40px;font-size:12.3px;color:#1a1a1a;left:647.18px;transform:scaleX(1.0894);transform-origin:right 0;">717</div>
<div class="c" style="top:448.40px;font-size:12.3px;color:#1a1a1a;left:711.98px;transform:scaleX(1.0894);transform-origin:right 0;">718</div>
<div class="c" style="top:448.40px;font-size:12.3px;color:#1a1a1a;left:771.69px;transform:scaleX(1.0894);transform-origin:right 0;">*662</div>
<div class="c" style="top:448.40px;font-size:12.3px;color:#1a1a1a;left:834.64px;transform:scaleX(1.0894);transform-origin:right 0;">1000</div>
<div class="c" style="top:448.40px;font-size:12.3px;color:#1a1a1a;left:899.04px;transform:scaleX(1.0894);transform-origin:right 0;">1000</div>
<div class="c" style="top:465.30px;font-size:12.3px;color:#1a1a1a;left:174.16px;transform:scaleX(1.0894);transform-origin:center 0;">10</div>
<div class="c" style="top:465.31px;font-size:12.2px;color:#1a1a1a;left:195.90px;transform:scaleX(1.0049);transform-origin:left 0;">RUEDA, JUAN ANTONIO</div>
<div class="c" style="top:465.31px;font-size:12.2px;color:#1a1a1a;left:367.79px;">ESP</div>
<div class="c" style="top:465.30px;font-size:12.3px;color:#1a1a1a;left:436.84px;transform:scaleX(1.0894);transform-origin:right 0;">3329</div>
<div class="c" style="top:465.30px;font-size:12.3px;color:#1a1a1a;left:483.91px;transform:scaleX(1.0894);transform-origin:center 0;">84.02</div>
<div class="c" style="top:465.30px;font-size:12.3px;color:#1a1a1a;left:575.74px;transform:scaleX(1.0894);transform-origin:right 0;">3959</div>
<div class="c" style="top:465.30px;font-size:12.3px;color:#1a1a1a;left:647.18px;transform:scaleX(1.0894);transform-origin:right 0;">771</div>
<div class="c" style="top:465.30px;font-size:12.3px;color:#1a1a1a;left:711.98px;transform:scaleX(1.0894);transform-origin:right 0;">742</div>
<div class="c" style="top:465.30px;font-size:12.3px;color:#1a1a1a;left:776.48px;transform:scaleX(1.0894);transform-origin:right 0;">994</div>
<div class="c" style="top:465.30px;font-size:12.3px;color:#1a1a1a;left:836.69px;transform:scaleX(1.0894);transform-origin:right 0;">*630</div>
<div class="c" style="top:465.30px;font-size:12.3px;color:#1a1a1a;left:905.88px;transform:scaleX(1.0894);transform-origin:right 0;">822</div>
<div class="c" style="top:492.00px;font-size:12.3px;color:#1a1a1a;left:174.62px;transform:scaleX(1.0894);transform-origin:center 0;">11</div>
<div class="c" style="top:492.01px;font-size:12.2px;color:#1a1a1a;left:195.90px;transform:scaleX(1.0049);transform-origin:left 0;">MARTÍN, CARLOS</div>
<div class="c" style="top:492.01px;font-size:12.2px;color:#1a1a1a;left:367.79px;">ESP</div>
<div class="c" style="top:492.00px;font-size:12.3px;color:#1a1a1a;left:436.84px;transform:scaleX(1.0894);transform-origin:right 0;">3134</div>
<div class="c" style="top:492.00px;font-size:12.3px;color:#1a1a1a;left:483.91px;transform:scaleX(1.0894);transform-origin:center 0;">79.10</div>
<div class="c" style="top:492.00px;font-size:12.3px;color:#1a1a1a;left:575.74px;transform:scaleX(1.0894);transform-origin:right 0;">3784</div>
<div class="c" style="top:492.00px;font-size:12.3px;color:#1a1a1a;left:647.18px;transform:scaleX(1.0894);transform-origin:right 0;">770</div>
<div class="c" style="top:492.00px;font-size:12.3px;color:#1a1a1a;left:711.98px;transform:scaleX(1.0894);transform-origin:right 0;">822</div>
<div class="c" style="top:492.00px;font-size:12.3px;color:#1a1a1a;left:776.48px;transform:scaleX(1.0894);transform-origin:right 0;">662</div>
<div class="c" style="top:492.00px;font-size:12.3px;color:#1a1a1a;left:841.48px;transform:scaleX(1.0894);transform-origin:right 0;">880</div>
<div class="c" style="top:492.00px;font-size:12.3px;color:#1a1a1a;left:901.09px;transform:scaleX(1.0894);transform-origin:right 0;">*650</div>
<div class="c" style="top:508.90px;font-size:12.3px;color:#1a1a1a;left:174.16px;transform:scaleX(1.0894);transform-origin:center 0;">12</div>
<div class="c" style="top:508.91px;font-size:12.2px;color:#1a1a1a;left:195.90px;transform:scaleX(1.0049);transform-origin:left 0;">RODRÍGUEZ HURTADO, FRANCISCO</div>
<div class="c" style="top:508.91px;font-size:12.2px;color:#1a1a1a;left:367.79px;">ESP</div>
<div class="c" style="top:508.90px;font-size:12.3px;color:#1a1a1a;left:436.84px;transform:scaleX(1.0894);transform-origin:right 0;">2617</div>
<div class="c" style="top:508.90px;font-size:12.3px;color:#1a1a1a;left:483.91px;transform:scaleX(1.0894);transform-origin:center 0;">66.05</div>
<div class="c" style="top:508.90px;font-size:12.3px;color:#1a1a1a;left:575.74px;transform:scaleX(1.0894);transform-origin:right 0;">3058</div>
<div class="c" style="top:508.90px;font-size:12.3px;color:#1a1a1a;left:647.18px;transform:scaleX(1.0894);transform-origin:right 0;">722</div>
<div class="c" style="top:508.90px;font-size:12.3px;color:#1a1a1a;left:711.98px;transform:scaleX(1.0894);transform-origin:right 0;">598</div>
<div class="c" style="top:508.90px;font-size:12.3px;color:#1a1a1a;left:771.69px;transform:scaleX(1.0894);transform-origin:right 0;">*441</div>
<div class="c" style="top:508.90px;font-size:12.3px;color:#1a1a1a;left:841.48px;transform:scaleX(1.0894);transform-origin:right 0;">636</div>
<div class="c" style="top:508.90px;font-size:12.3px;color:#1a1a1a;left:905.88px;transform:scaleX(1.0894);transform-origin:right 0;">661</div>
<div class="c" style="top:525.80px;font-size:12.3px;color:#1a1a1a;left:174.16px;transform:scaleX(1.0894);transform-origin:center 0;">13</div>
<div class="c" style="top:525.81px;font-size:12.2px;color:#1a1a1a;left:195.90px;transform:scaleX(1.0049);transform-origin:left 0;">ROMÁN, MANUEL</div>
<div class="c" style="top:525.81px;font-size:12.2px;color:#1a1a1a;left:367.79px;">ESP</div>
<div class="c" style="top:525.80px;font-size:12.3px;color:#1a1a1a;left:436.84px;transform:scaleX(1.0894);transform-origin:right 0;">2560</div>
<div class="c" style="top:525.80px;font-size:12.3px;color:#1a1a1a;left:483.91px;transform:scaleX(1.0894);transform-origin:center 0;">64.61</div>
<div class="c" style="top:525.80px;font-size:12.3px;color:#1a1a1a;left:575.74px;transform:scaleX(1.0894);transform-origin:right 0;">2560</div>
<div class="c" style="top:525.80px;font-size:12.3px;color:#1a1a1a;left:656.07px;transform:scaleX(1.0894);transform-origin:right 0;">*0</div>
<div class="c" style="top:525.80px;font-size:12.3px;color:#1a1a1a;left:711.98px;transform:scaleX(1.0894);transform-origin:right 0;">973</div>
<div class="c" style="top:525.80px;font-size:12.3px;color:#1a1a1a;left:776.48px;transform:scaleX(1.0894);transform-origin:right 0;">418</div>
<div class="c" style="top:525.80px;font-size:12.3px;color:#1a1a1a;left:841.48px;transform:scaleX(1.0894);transform-origin:right 0;">584</div>
<div class="c" style="top:525.80px;font-size:12.3px;color:#1a1a1a;left:905.88px;transform:scaleX(1.0894);transform-origin:right 0;">585</div>
<div class="c" style="top:542.70px;font-size:12.3px;color:#1a1a1a;left:174.16px;transform:scaleX(1.0894);transform-origin:center 0;">14</div>
<div class="c" style="top:542.71px;font-size:12.2px;color:#1a1a1a;left:195.90px;transform:scaleX(1.0049);transform-origin:left 0;">BERENGUER, JOSE MARIA</div>
<div class="c" style="top:542.71px;font-size:12.2px;color:#1a1a1a;left:367.79px;">ESP</div>
<div class="c" style="top:542.70px;font-size:12.3px;color:#1a1a1a;left:436.84px;transform:scaleX(1.0894);transform-origin:right 0;">2192</div>
<div class="c" style="top:542.70px;font-size:12.3px;color:#1a1a1a;left:483.91px;transform:scaleX(1.0894);transform-origin:center 0;">55.33</div>
<div class="c" style="top:542.70px;font-size:12.3px;color:#1a1a1a;left:575.74px;transform:scaleX(1.0894);transform-origin:right 0;">2591</div>
<div class="c" style="top:542.70px;font-size:12.3px;color:#1a1a1a;left:647.18px;transform:scaleX(1.0894);transform-origin:right 0;">649</div>
<div class="c" style="top:542.70px;font-size:12.3px;color:#1a1a1a;left:707.19px;transform:scaleX(1.0894);transform-origin:right 0;">*399</div>
<div class="c" style="top:542.70px;font-size:12.3px;color:#1a1a1a;left:776.48px;transform:scaleX(1.0894);transform-origin:right 0;">518</div>
<div class="c" style="top:542.70px;font-size:12.3px;color:#1a1a1a;left:841.48px;transform:scaleX(1.0894);transform-origin:right 0;">431</div>
<div class="c" style="top:542.70px;font-size:12.3px;color:#1a1a1a;left:905.88px;transform:scaleX(1.0894);transform-origin:right 0;">594</div>
<div class="c" style="top:559.60px;font-size:12.3px;color:#1a1a1a;left:174.16px;transform:scaleX(1.0894);transform-origin:center 0;">15</div>
<div class="c" style="top:559.61px;font-size:12.2px;color:#1a1a1a;left:195.90px;transform:scaleX(1.0049);transform-origin:left 0;">HERRÁEZ, JUAN CARLOS</div>
<div class="c" style="top:559.61px;font-size:12.2px;color:#1a1a1a;left:367.79px;">ESP</div>
<div class="c" style="top:559.60px;font-size:12.3px;color:#1a1a1a;left:457.36px;transform:scaleX(1.0894);transform-origin:right 0;">0</div>
<div class="c" style="top:559.60px;font-size:12.3px;color:#1a1a1a;left:487.33px;transform:scaleX(1.0894);transform-origin:center 0;">0.00</div>
<div class="c" style="top:559.60px;font-size:12.3px;color:#1a1a1a;left:596.26px;transform:scaleX(1.0894);transform-origin:right 0;">0</div>
<div class="c" style="top:559.60px;font-size:12.3px;color:#1a1a1a;left:660.86px;transform:scaleX(1.0894);transform-origin:right 0;">0</div>
<div class="c" style="top:559.60px;font-size:12.3px;color:#1a1a1a;left:725.66px;transform:scaleX(1.0894);transform-origin:right 0;">0</div>
<div class="c" style="top:559.60px;font-size:12.3px;color:#1a1a1a;left:790.16px;transform:scaleX(1.0894);transform-origin:right 0;">0</div>
<div class="c" style="top:559.60px;font-size:12.3px;color:#1a1a1a;left:855.16px;transform:scaleX(1.0894);transform-origin:right 0;">0</div>
<div class="c" style="top:559.60px;font-size:12.3px;color:#1a1a1a;left:914.77px;transform:scaleX(1.0894);transform-origin:right 0;">*0</div>
<div class="a" style="left:150px;top:588px;width:873px;height:15px;background:#f8f8f8"></div>
<svg class="a" style="left:152px;top:590px" width="10" height="12" viewBox="0 0 10 12"><path d="M8.5 1.5 L1.5 6 L8.5 10.5Z" fill="#8a8a8a" stroke="#8a8a8a" stroke-width="1.2" stroke-linejoin="round"/></svg>
<div class="a" style="left:167px;top:591px;width:725px;height:9px;background:#8a8a8a;border-radius:4.5px"></div>
<svg class="a" style="left:1011px;top:590px" width="10" height="12" viewBox="0 0 10 12"><path d="M1.5 1.5 L8.5 6 L1.5 10.5Z" fill="#8a8a8a" stroke="#8a8a8a" stroke-width="1.2" stroke-linejoin="round"/></svg>
<div class="a" style="left:0;top:603px;width:1024px;height:90px;background:#d4d4d4;border-top:1px solid #111;border-bottom:1px solid #111;border-right:1px solid #111;box-shadow:inset 0 1px 0 #e2e2e2,inset -1px -1px 0 #e2e2e2"></div>
<div class="c" style="top:627.58px;font-size:16px;color:#000;font-weight:bold;left:314.40px;transform:scaleX(0.9354);transform-origin:left 0;">GliderScore software and this web site Copyright ©</div>
<div class="c" style="top:657.34px;font-size:10.9px;color:#111;left:309.20px;transform:scaleX(0.9830);transform-origin:left 0;-webkit-text-stroke:0.35px #111;">Comments and suggestions welcomed. Send to gerry.carter(at)gliderscore.com</div>
<div class="c" style="top:681.24px;font-size:10.9px;color:#111;left:287.70px;transform:scaleX(0.9842);transform-origin:left 0;-webkit-text-stroke:0.35px #111;">Software downloaded from this site is provided free and carries no warranty whatsoever.</div>
</body></html>
